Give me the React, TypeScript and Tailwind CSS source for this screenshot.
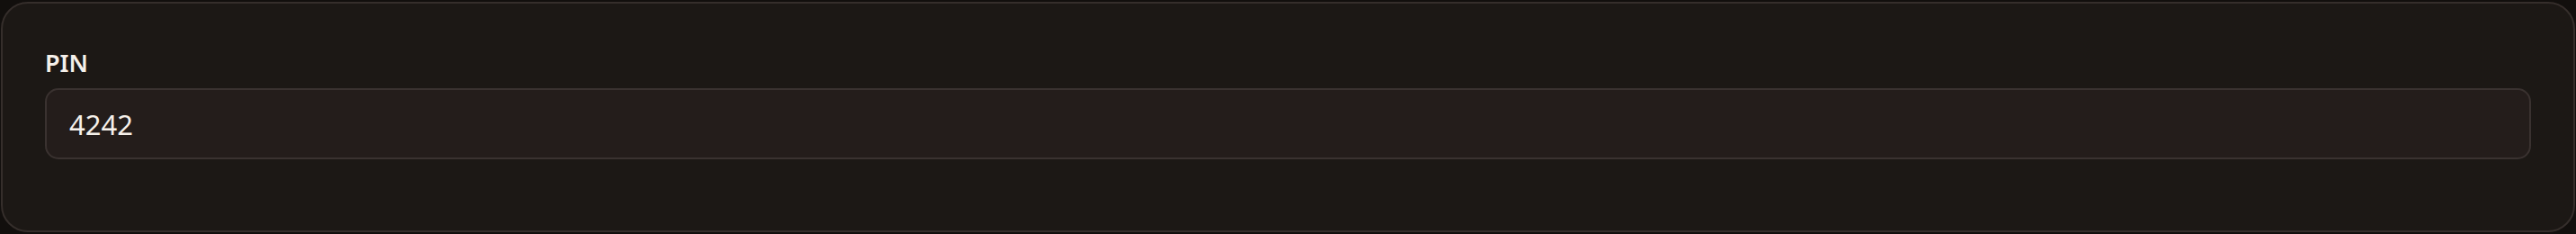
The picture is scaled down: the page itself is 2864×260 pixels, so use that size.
import React from "react";

export default function App() {
  return (
    <div className="w-[2864px] h-[260px] bg-[#120f0d] pt-[2px] px-[1px]" style={{ fontFamily: '"Noto Sans", sans-serif' }}>
      <div className="h-[256px] rounded-[30px] border-2 border-[#352e2b] bg-[#1c1815] px-[47px] pt-[48px]">
        <label className="block text-[27px] leading-[36px] font-semibold text-[#f5f0ea]">PIN</label>
        <div className="mt-[10px] h-[79px] rounded-[15px] border-2 border-[#3a3230] bg-[#241d1b] flex items-center pl-[25px]">
          <span className="text-[31px] leading-[40px] text-[#f5f0ea]">4242</span>
        </div>
      </div>
    </div>
  );
}
